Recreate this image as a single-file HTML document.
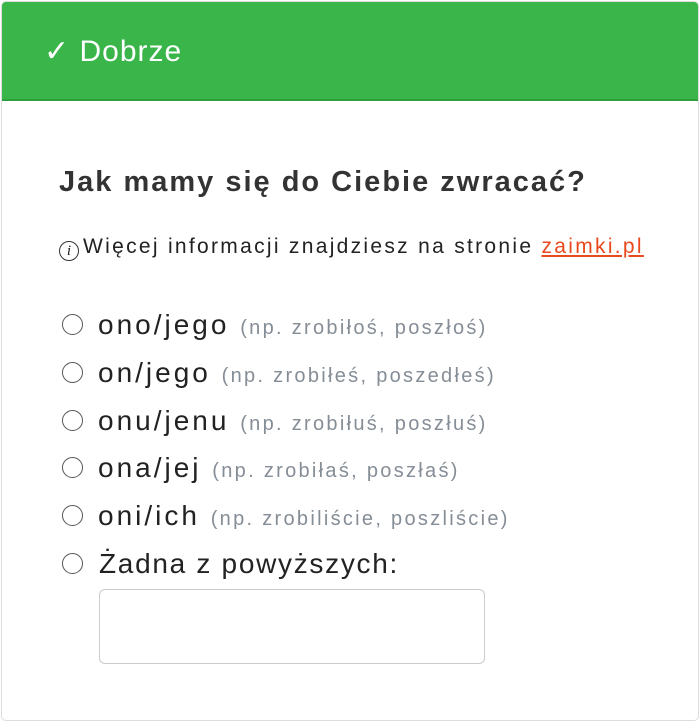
<!DOCTYPE html>
<html><head><style>
body{margin:0;width:700px;height:722px;background:#fff;font-family:"Liberation Sans",sans-serif;overflow:hidden}
.card{position:absolute;left:1px;top:1px;width:696px;height:718px;border:1px solid #ddd;border-radius:5px;overflow:hidden}
.hd{position:absolute;left:0;top:0;width:100%;height:97px;background:#39b54a;border-bottom:2px solid #2f9e3f;color:#fff;font-size:30px;letter-spacing:1px}
.hd span{position:absolute;left:42px;top:32px}
h2{position:absolute;left:57px;top:164px;margin:0;font-size:29px;letter-spacing:2px;font-weight:bold;color:#333;white-space:nowrap}
.info{position:absolute;left:57px;top:233px;font-size:21px;letter-spacing:2.3px;color:#222;white-space:nowrap}
.info a{color:#e8491d;text-decoration:underline}
.ic{display:inline-block;width:20px;height:20px;border:1.5px solid #333;border-radius:50%;font:italic 15px "Liberation Serif",serif;letter-spacing:0;text-align:center;line-height:18px;vertical-align:-2px;margin-right:4px;box-sizing:border-box}
.r{position:absolute;left:60px;font-size:28px;letter-spacing:3px;color:#222;white-space:nowrap}
.r i{display:inline-block;width:21px;height:21px;border:1.5px solid #555;border-radius:50%;box-sizing:border-box;vertical-align:-1px;margin-right:15px}
.r small{font-size:20px;letter-spacing:2.3px;color:#858d96}
.inp{position:absolute;left:97px;top:587px;width:386px;height:75px;border:1.5px solid #ccc;border-radius:6px;box-sizing:border-box}
</style></head><body>
<div class="card">
<div class="hd"><span>✓ Dobrze</span></div>
<h2>Jak mamy się do Ciebie zwracać?</h2>
<div class="info"><span class="ic">i</span>Więcej informacji znajdziesz na stronie <a>zaimki.pl</a></div>
<div class="r" style="top:307px"><i></i>ono/jego <small>(np. zrobiłoś, poszłoś)</small></div>
<div class="r" style="top:355px"><i></i>on/jego <small>(np. zrobiłeś, poszedłeś)</small></div>
<div class="r" style="top:403px"><i></i>onu/jenu <small>(np. zrobiłuś, poszłuś)</small></div>
<div class="r" style="top:450px"><i></i>ona/jej <small>(np. zrobiłaś, poszłaś)</small></div>
<div class="r" style="top:498px"><i></i>oni/ich <small>(np. zrobiliście, poszliście)</small></div>
<div class="r" style="top:546px;letter-spacing:1.7px"><i style="margin-right:16px"></i>Żadna z powyższych:</div>
<div class="inp"></div>
</div>
</body></html>
